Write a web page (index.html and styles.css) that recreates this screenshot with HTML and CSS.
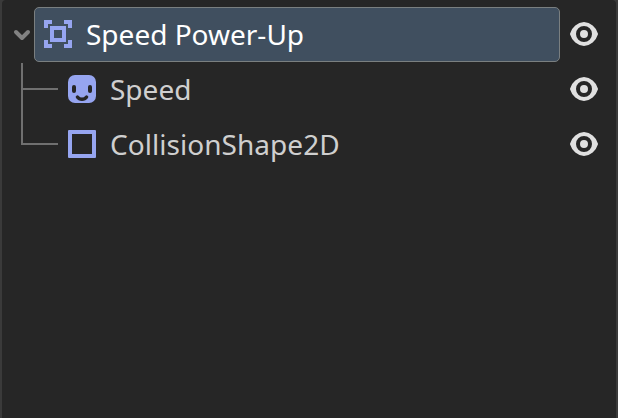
FILE: index.html
```html
<!DOCTYPE html>
<html lang="en">
<head>
<meta charset="utf-8">
<title>Scene tree</title>
<link rel="stylesheet" href="styles.css">
</head>
<body>
<svg class="defs" aria-hidden="true">
  <symbol id="eye" viewBox="0 0 16 16"><path fill="#e0e0e0" fill-rule="evenodd" d="M8 2a8 8 0 0 0-6.95 5.7 1 1 0 0 0 0 .6A8 8 0 0 0 8 14a8 8 0 0 0 6.95-5.7 1 1 0 0 0 0-.6A8 8 0 0 0 8 2zm0 2a4 4 0 0 1 0 8 4 4 0 0 1 0-8zm0 2a2 2 0 0 0 0 4 2 2 0 0 0 0-4z"/></symbol>
</svg>
<main class="tree">
  <div class="row">
    <svg class="arrow" viewBox="0 0 20 16"><path d="M4 5l6 6 6-6"/></svg>
    <div class="item selected">
      <svg class="icon" viewBox="0 0 16 16"><path d="M1 1v4h2V3h2V1zm10 0v2h2v2h2V1zM4 4v8h8V4zm2 2h4v4H6zm-5 5v4h4v-2H3v-2zm12 0v2h-2v2h4v-4z" fill-rule="evenodd"/></svg>
      <span class="label">Speed Power-Up</span>
    </div>
    <svg class="eye"><use href="#eye"/></svg>
  </div>
  <div class="children">
    <svg class="lines" viewBox="0 0 38 83"><path d="M1 0v81h36M1 26h36"/></svg>
    <div class="row">
      <div class="item child">
        <svg class="icon" viewBox="0 0 16 16"><rect x="1" y="1" width="14" height="14" rx="3.5"/><g class="face"><rect x="3" y="6" width="2" height="4" rx="1"/><rect x="11" y="6" width="2" height="4" rx="1"/><path d="M5.7 12c1.1 1.5 3.5 1.5 4.6 0"/></g></svg>
        <span class="label">Speed</span>
      </div>
      <svg class="eye"><use href="#eye"/></svg>
    </div>
    <div class="row">
      <div class="item child">
        <svg class="icon" viewBox="0 0 16 16"><path fill-rule="evenodd" d="M1.5 1a.5.5 0 0 0-.5.5v13a.5.5 0 0 0 .5.5h13a.5.5 0 0 0 .5-.5v-13a.5.5 0 0 0-.5-.5zM3 3h10v10H3z"/></svg>
        <span class="label wide">CollisionShape2D</span>
      </div>
      <svg class="eye"><use href="#eye"/></svg>
    </div>
  </div>
</main>
</body>
</html>
```
FILE: styles.css
```css
* { box-sizing: border-box; }
body {
  margin: 0;
  background: #3a3a3a;
  font-family: "Noto Sans", sans-serif;
  overflow: hidden;
}
.defs { display: none; }
.tree {
  height: 418px;
  margin: 0 2px;
  padding: 7px 16px 0 10px;
  background: #262626;
  border-radius: 4px 4px 0 0;
}
.row {
  display: flex;
  align-items: center;
  height: 55px;
}
.arrow {
  width: 20px;
  height: 16px;
  margin-right: 2px;
  fill: none;
  stroke: #828282;
  stroke-width: 4;
  stroke-linecap: round;
  stroke-linejoin: round;
}
.item {
  display: flex;
  flex: 1;
  align-items: center;
  height: 55px;
  gap: 12px;
  padding: 0 8px 1px 7px;
  border: 1px solid transparent;
  border-radius: 5px;
  color: #cfcfcf;
}
.item.child { margin-left: 46px; }
.selected {
  background: #404f5f;
  border-color: #7a7f80;
  color: #fff;
}
.icon {
  width: 32px;
  height: 32px;
  flex: none;
  fill: #96a5f0;
}
.label {
  font-size: 28px;
  line-height: 38px;
  white-space: pre;
}
.label.wide { letter-spacing: 0.04px; }
.face { fill: #262626; }
.face path {
  fill: none;
  stroke: #262626;
  stroke-width: 1.7;
  stroke-linecap: round;
}
.eye {
  width: 32px;
  height: 32px;
  margin: 0 0 1px 8px;
  flex: none;
}
.children { position: relative; }
.lines {
  position: absolute;
  left: 9px;
  top: 1px;
  width: 38px;
  height: 83px;
  fill: none;
  stroke: #707070;
  stroke-width: 2;
}
```
